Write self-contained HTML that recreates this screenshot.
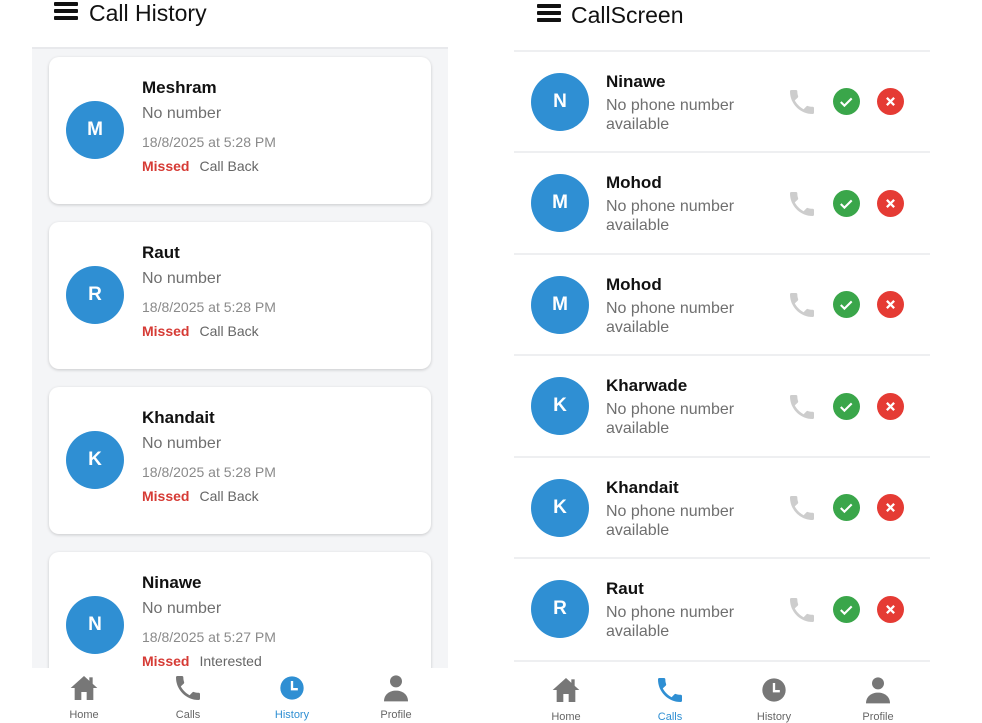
<!DOCTYPE html>
<html><head><meta charset="utf-8"><style>
*{margin:0;padding:0;box-sizing:border-box}
body{width:982px;height:720px;background:#fff;position:relative;overflow:hidden;font-family:"Liberation Sans",sans-serif}
.abs{position:absolute}
.ham{position:absolute;width:24px;height:18px}
.ham i{display:block;height:3.5px;background:#111;margin-bottom:3.5px;border-radius:1px}
.title{position:absolute;font-size:23px;color:#111}
.lpanel{position:absolute;left:32px;top:47px;width:416px;height:621px;background:#f4f5f7;border-top:2px solid #e8e9ec}
.card{position:absolute;left:17px;width:382px;height:147px;background:#fff;border-radius:10px;box-shadow:0 1px 3px rgba(0,0,0,.18)}
.av{position:absolute;width:58px;height:58px;border-radius:50%;background:#2f8fd3;color:#fff;font-weight:bold;font-size:19px;display:flex;align-items:center;justify-content:center}
.name{position:absolute;font-weight:bold;font-size:17px;color:#111}
.sub{position:absolute;font-size:16px;color:#6f6f6f}
.date{position:absolute;font-size:14px;color:#8a8a8a}
.st{position:absolute;font-size:14px;color:#666}
.st b{color:#d63b35;margin-right:10px}
.row{position:absolute;left:514px;width:416px;height:102px;border-top:2px solid #eeeff1}
.nav{position:absolute;top:668px;height:52px;width:416px;background:#fff}
.ni{position:absolute;top:4px;width:60px;margin-left:-30px;text-align:center}
.ni span{display:block;font-size:11px;color:#666;margin-top:0px}
.ni.on span{color:#2f8fd3}
.ic{width:32px;height:32px;display:inline-block}
</style></head><body>

<div class="ham" style="left:54px;top:2px"><i></i><i></i><i></i></div>
<div class="title" style="left:89px;top:0px">Call History</div>
<div class="lpanel">
  <div class="card" style="top:8px">
    <div class="av" style="left:17px;top:44px">M</div>
    <div class="name" style="left:93px;top:21px">Meshram</div>
    <div class="sub" style="left:93px;top:48px">No number</div>
    <div class="date" style="left:93px;top:77px">18/8/2025 at 5:28 PM</div>
    <div class="st" style="left:93px;top:101px"><b>Missed</b>Call Back</div>
  </div>
  <div class="card" style="top:173px">
    <div class="av" style="left:17px;top:44px">R</div>
    <div class="name" style="left:93px;top:21px">Raut</div>
    <div class="sub" style="left:93px;top:48px">No number</div>
    <div class="date" style="left:93px;top:77px">18/8/2025 at 5:28 PM</div>
    <div class="st" style="left:93px;top:101px"><b>Missed</b>Call Back</div>
  </div>
  <div class="card" style="top:338px">
    <div class="av" style="left:17px;top:44px">K</div>
    <div class="name" style="left:93px;top:21px">Khandait</div>
    <div class="sub" style="left:93px;top:48px">No number</div>
    <div class="date" style="left:93px;top:77px">18/8/2025 at 5:28 PM</div>
    <div class="st" style="left:93px;top:101px"><b>Missed</b>Call Back</div>
  </div>
  <div class="card" style="top:503px;height:130px">
    <div class="av" style="left:17px;top:44px">N</div>
    <div class="name" style="left:93px;top:21px">Ninawe</div>
    <div class="sub" style="left:93px;top:48px">No number</div>
    <div class="date" style="left:93px;top:77px">18/8/2025 at 5:27 PM</div>
    <div class="st" style="left:93px;top:101px"><b>Missed</b>Interested</div>
  </div>
</div>

<div class="ham" style="left:537px;top:4px"><i></i><i></i><i></i></div>
<div class="title" style="left:571px;top:2px">CallScreen</div>

<div class="abs" style="left:514px;top:660px;width:416px;border-top:2px solid #eeeff1"></div>

<svg width="0" height="0" style="position:absolute">
<defs>
<symbol id="ph" viewBox="0 0 24 24"><path d="M6.6 10.8c1.4 2.8 3.8 5.1 6.6 6.6l2.2-2.2c.3-.3.7-.4 1-.2 1.1.4 2.3.6 3.6.6.6 0 1 .4 1 1V20c0 .6-.4 1-1 1C10.6 21 3 13.4 3 4c0-.6.4-1 1-1h3.5c.6 0 1 .4 1 1 0 1.3.2 2.5.6 3.6.1.3 0 .7-.2 1z"/></symbol>
<symbol id="home" viewBox="0 0 24 24"><path d="M12 3L2 12h3v9h5v-6h4v6h5v-9h3z"/><rect x="16" y="4" width="2.5" height="5"/></symbol>
<symbol id="clock" viewBox="0 0 24 24"><circle cx="12" cy="12" r="10"/><path d="M11 6h2v6h4v2h-6z" fill="#fff"/></symbol>
<symbol id="user" viewBox="0 0 24 24"><circle cx="12" cy="7" r="4.5"/><path d="M3 22c0-5 4-8 9-8s9 3 9 8z"/></symbol>
</defs></svg>

<div class="row" style="top:50px">
  <div class="av" style="left:17px;top:21px">N</div>
  <div class="name" style="left:92px;top:20px">Ninawe</div>
  <div class="sub" style="left:92px;top:44px;line-height:19px">No phone number<br>available</div>
</div>
<div class="row" style="top:151px">
  <div class="av" style="left:17px;top:21px">M</div>
  <div class="name" style="left:92px;top:20px">Mohod</div>
  <div class="sub" style="left:92px;top:44px;line-height:19px">No phone number<br>available</div>
</div>
<div class="row" style="top:253px">
  <div class="av" style="left:17px;top:21px">M</div>
  <div class="name" style="left:92px;top:20px">Mohod</div>
  <div class="sub" style="left:92px;top:44px;line-height:19px">No phone number<br>available</div>
</div>
<div class="row" style="top:354px">
  <div class="av" style="left:17px;top:21px">K</div>
  <div class="name" style="left:92px;top:20px">Kharwade</div>
  <div class="sub" style="left:92px;top:44px;line-height:19px">No phone number<br>available</div>
</div>
<div class="row" style="top:456px">
  <div class="av" style="left:17px;top:21px">K</div>
  <div class="name" style="left:92px;top:20px">Khandait</div>
  <div class="sub" style="left:92px;top:44px;line-height:19px">No phone number<br>available</div>
</div>
<div class="row" style="top:557px">
  <div class="av" style="left:17px;top:21px">R</div>
  <div class="name" style="left:92px;top:20px">Raut</div>
  <div class="sub" style="left:92px;top:44px;line-height:19px">No phone number<br>available</div>
</div>

<div id="acts"></div>
<script>
var ys=[101,203,304,406,507,609],h='';
ys.forEach(function(y){
h+='<svg class="abs" style="left:786px;top:'+(y-15)+'px" width="32" height="32" viewBox="0 0 24 24" fill="#cdcdcd"><use href="#ph"/></svg>';
h+='<svg class="abs" style="left:833px;top:'+(y-13)+'px" width="27" height="27" viewBox="0 0 26 26"><circle cx="13" cy="13" r="13" fill="#3aa64a"/><path d="M7.5 13.5l3.5 3.5 7-7" stroke="#fff" stroke-width="2" fill="none"/></svg>';
h+='<svg class="abs" style="left:877px;top:'+(y-13)+'px" width="27" height="27" viewBox="0 0 26 26"><circle cx="13" cy="13" r="13" fill="#e53b34"/><path d="M9.5 9.5l7 7M16.5 9.5l-7 7" stroke="#fff" stroke-width="2.2"/></svg>';
});
document.getElementById('acts').innerHTML=h;
</script>

<div class="nav" style="left:32px">
  <div class="ni" style="left:52px"><svg class="ic" fill="#777"><use href="#home"/></svg><span>Home</span></div>
  <div class="ni" style="left:156px"><svg class="ic" fill="#777"><use href="#ph"/></svg><span>Calls</span></div>
  <div class="ni on" style="left:260px"><svg class="ic" fill="#2f8fd3" style="width:28px"><use href="#clock"/></svg><span>History</span></div>
  <div class="ni" style="left:364px"><svg class="ic" fill="#777"><use href="#user"/></svg><span>Profile</span></div>
</div>
<div class="nav" style="left:514px;top:670px">
  <div class="ni" style="left:52px"><svg class="ic" fill="#777"><use href="#home"/></svg><span>Home</span></div>
  <div class="ni on" style="left:156px"><svg class="ic" fill="#2f8fd3"><use href="#ph"/></svg><span>Calls</span></div>
  <div class="ni" style="left:260px"><svg class="ic" fill="#777" style="width:28px"><use href="#clock"/></svg><span>History</span></div>
  <div class="ni" style="left:364px"><svg class="ic" fill="#777"><use href="#user"/></svg><span>Profile</span></div>
</div>
</body></html>
